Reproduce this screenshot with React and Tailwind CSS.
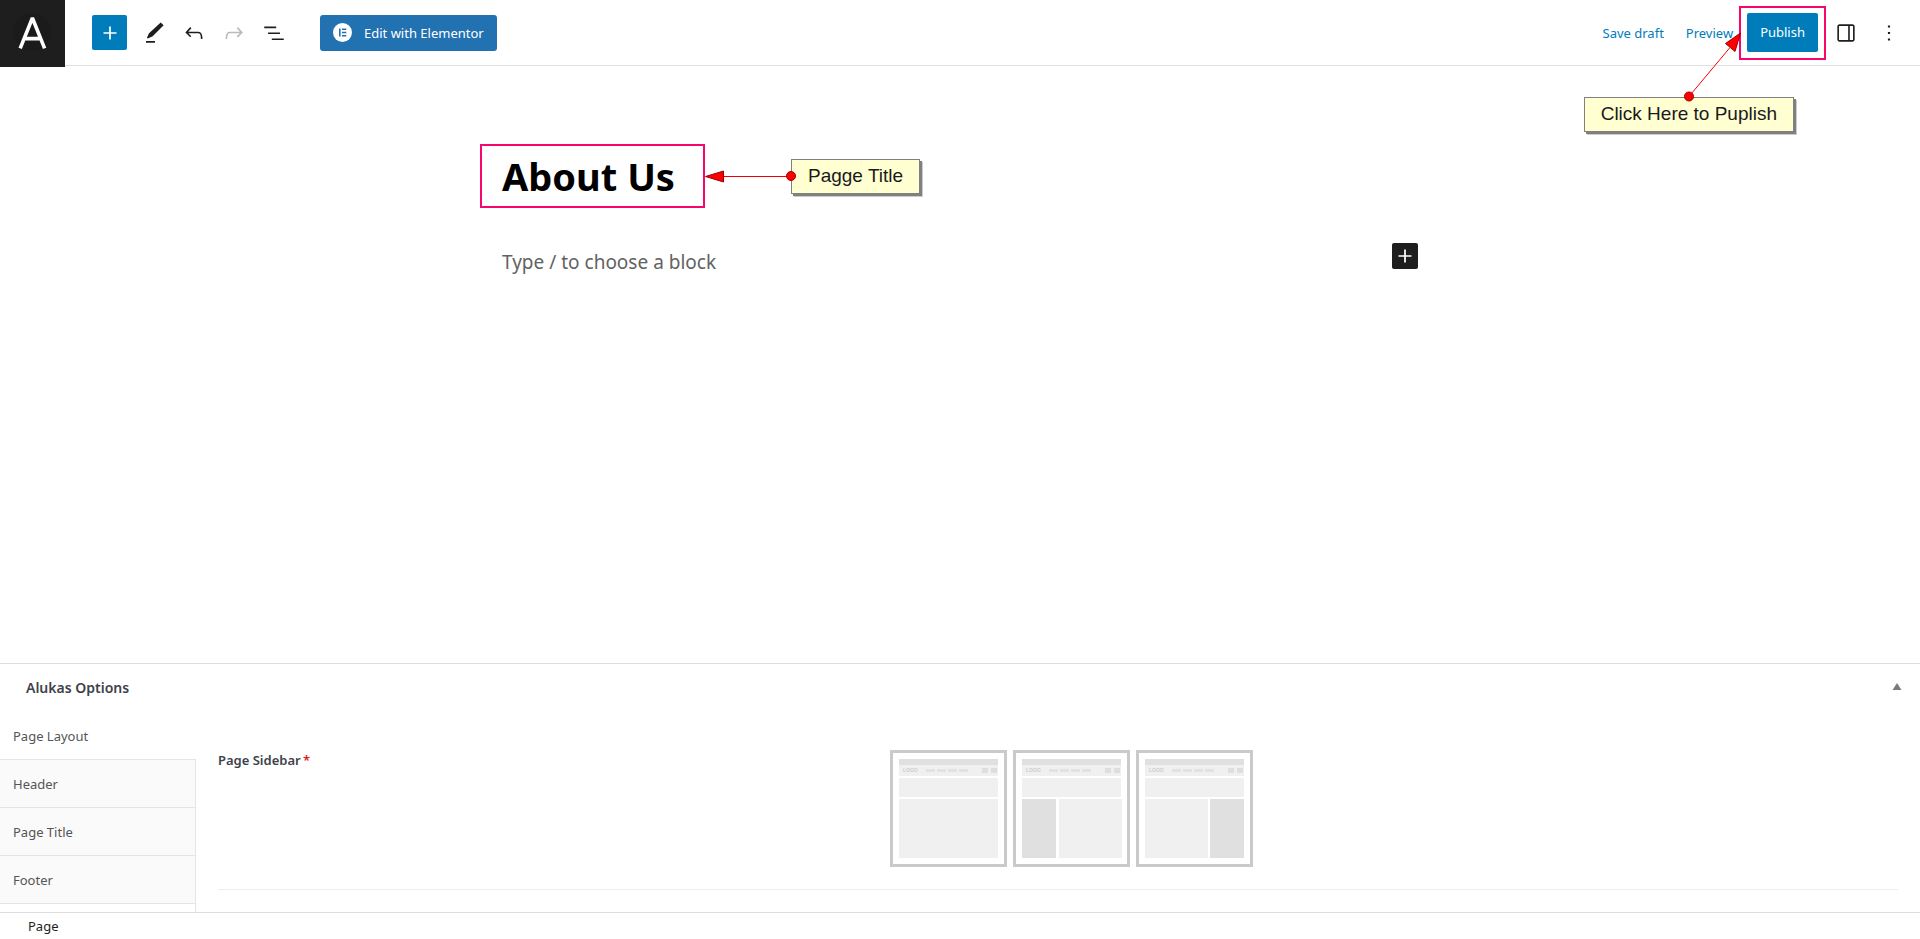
import React from 'react';

const paths = {
  plus: 'M18 11.2h-5.2V6h-1.6v5.2H6v1.6h5.2V18h1.6v-5.2H18z',
  edit: 'M18.2 2.2 20.9 4.9 10.8 15.1 6.2 17 5.5 16.3 7.4 12.2zM4.6 19.4h8.3v1.5H4.6z',
  undo: 'M18.3 11.7c-.6-.6-1.4-.9-2.3-.9H6.7l2.9-3.3-1.1-1-4.5 5L8.5 16l1-1-2.7-2.7H16c.5 0 .9.2 1.3.5 1 1 1 3.4 1 4.5v.3h1.5v-.2c0-1.5 0-4.3-1.5-5.7z',
  redo: 'M15.6 6.5l-1.1 1 2.9 3.3H8c-.9 0-1.7.3-2.3.9-1.4 1.5-1.4 4.2-1.4 5.6v.2h1.5v-.3c0-1.1 0-3.5 1-4.5.3-.3.7-.5 1.3-.5h9.2L14.5 15l1.1 1.1 4.6-4.6-4.6-5z',
  list: 'M3 6h11v1.5H3V6Zm3.5 5.5h11V13h-11v-1.5ZM21 17H10v1.5h11V17Z',
  drawer:
    'M18 4H6c-1.1 0-2 .9-2 2v12c0 1.1.9 2 2 2h12c1.1 0 2-.9 2-2V6c0-1.1-.9-2-2-2zm-4 14.5H6c-.3 0-.5-.2-.5-.5V6c0-.3.2-.5.5-.5h8v13zm4.5-.5c0 .3-.2.5-.5.5h-2.5v-13H18c.3 0 .5.2.5.5v12z',
  more: 'M13 19h-2v-2h2v2zm0-6h-2v-2h2v2zm0-6h-2V5h2v2z',
};

function Icon({ name }) {
  return (
    <svg viewBox="0 0 24 24" className="size-[26px] shrink-0 fill-current" aria-hidden="true">
      <path d={paths[name]} />
    </svg>
  );
}

function ToolButton({ name, label, disabled }) {
  return (
    <button
      type="button"
      aria-label={label}
      disabled={disabled}
      className="flex h-9 w-[26px] items-center justify-center text-[#1e1e1e] disabled:text-[#bbbbbb]"
    >
      <Icon name={name} />
    </button>
  );
}

function Callout({ children }) {
  return (
    <div className="flex h-[35px] items-center border border-[#808080] bg-[#ffffd2] px-4 font-['Liberation_Sans',Arial,sans-serif] text-[19px] leading-6 whitespace-nowrap text-[#1a1a1a] shadow-[2px_2px_0_#808080,3px_3px_0_#cccccc]">
      {children}
    </div>
  );
}

function Header() {
  return (
    <header className="flex h-[66px] items-center border-b border-[#e0e0e0]">
      <a href="#pages" aria-label="View pages" className="h-[67px] w-[65px] shrink-0 self-start bg-[#1e1e1e]">
        <svg viewBox="0 0 65 67" className="h-full w-full" aria-hidden="true">
          <circle cx="32.5" cy="32" r="19" fill="#1b1b1b" />
          <path
            d="M20.2 48.3 32.4 18 44.6 48.3M25.5 38.6h13.8"
            fill="none"
            stroke="#fff"
            strokeWidth="3.6"
            strokeLinejoin="miter"
            strokeMiterlimit="1.5"
          />
        </svg>
      </a>
      <div className="ml-[27px] flex items-center gap-[14px]">
        <button
          type="button"
          aria-label="Toggle block inserter"
          className="flex size-[35px] items-center justify-center rounded-xs bg-[#007cba] text-white"
        >
          <Icon name="plus" />
        </button>
        <ToolButton name="edit" label="Tools" />
        <ToolButton name="undo" label="Undo" />
        <ToolButton name="redo" label="Redo" disabled />
        <ToolButton name="list" label="Document overview" />
      </div>
      <button
        type="button"
        className="ml-[33px] flex h-9 items-center gap-3 rounded-[3px] bg-[#2271b1] px-[13px] text-[13px] leading-5 whitespace-nowrap text-white"
      >
        <svg viewBox="0 0 19 19" className="size-[19px] shrink-0" aria-hidden="true">
          <circle cx="9.5" cy="9.5" r="9.5" fill="#fff" />
          <path d="M6 5.5h1.6v8H6zM9 5.5h4.3v1.6H9zM9 8.7h4.3v1.6H9zM9 11.9h4.3v1.6H9z" fill="#2271b1" />
        </svg>
        Edit with Elementor
      </button>
      <div className="ml-auto flex items-center pr-[18px] text-[13px] leading-5 whitespace-nowrap">
        <button type="button" className="text-[#007cba]">
          Save draft
        </button>
        <button type="button" className="ml-[22px] text-[#007cba]">
          Preview
        </button>
        <div className="relative ml-[6px] border-2 border-[#f9066c] px-[6px] pt-[5px] pb-[6px]">
          <button type="button" className="flex h-[39px] items-center rounded-xs bg-[#007cba] px-[13px] text-white">
            Publish
          </button>
          <div className="absolute top-[89px] right-[30px]">
            <Callout>Click Here to Puplish</Callout>
          </div>
          <svg
            viewBox="0 0 62 74"
            className="absolute top-[22px] -left-[58px] h-[74px] w-[62px]"
            aria-hidden="true"
          >
            <path d="M6 66.5 47 17.5" stroke="#f00" strokeWidth="1" />
            <path d="M57.5 3 42.5 13.5 52 21.5z" fill="#f00" stroke="#900" strokeWidth="1" />
            <circle cx="6" cy="66.5" r="4.5" fill="#f00" stroke="#900" strokeWidth="1" />
          </svg>
        </div>
        <div className="ml-[7px] flex gap-[17px]">
          <ToolButton name="drawer" label="Settings" />
          <ToolButton name="more" label="Options" />
        </div>
      </div>
    </header>
  );
}

function Editor() {
  return (
    <main className="flex-1 pt-[78px] pb-10">
      <div className="mx-auto w-full max-w-[916px]">
        <div className="-ml-[22px] flex items-center">
          <h1 className="flex h-16 w-[225px] items-center border-2 border-[#f9066c] pl-5 text-[38px] leading-[60px] font-bold whitespace-nowrap text-black">
            About Us
          </h1>
          <svg viewBox="0 0 86 16" className="h-4 w-[86px] shrink-0" aria-hidden="true">
            <path d="M18 8.5h68" stroke="#e00" strokeWidth="1" />
            <path d="M.5 8.5 18.5 3v11z" fill="#f00" stroke="#900" strokeWidth="1" />
          </svg>
          <div className="relative">
            <Callout>Pagge Title</Callout>
            <svg viewBox="0 0 10 10" className="absolute top-3 -left-[5px] size-[10px]" aria-hidden="true">
              <circle cx="5" cy="5" r="4.5" fill="#f00" stroke="#900" strokeWidth="1" />
            </svg>
          </div>
        </div>
        <div className="mt-[35px] flex items-start justify-between">
          <input
            type="text"
            aria-label="Add default block"
            placeholder="Type / to choose a block"
            className="h-[38px] min-w-0 flex-1 bg-transparent text-[19px] outline-none placeholder:text-[#626262]"
          />
          <button
            type="button"
            aria-label="Add block"
            className="flex size-[26px] items-center justify-center rounded-xs bg-[#1e1e1e] text-white"
          >
            <Icon name="plus" />
          </button>
        </div>
      </div>
    </main>
  );
}

function LayoutPreview({ sidebar }) {
  return (
    <svg viewBox="0 0 111 111" className="size-[111px]" aria-hidden="true">
      <path d="M6 6h99v17H6zM6 25h99v19H6z" fill="#f0f0f0" />
      <path d="M6 6h99v6H6z" fill="#e0e0e0" />
      <text x="10" y="19" fontSize="5" fontWeight="bold" fill="#cccccc" fontFamily="Liberation Sans, sans-serif">
        LOGO
      </text>
      <path d="M33 16h9v3h-9zM44 16h9v3h-9zM55 16h9v3h-9zM66 16h9v3h-9z" fill="#e2e2e2" />
      <path d="M89 15h6v5h-6zM98 15h6v5h-6z" fill="#dedede" />
      {sidebar === 'none' && <path d="M6 46h99v59H6z" fill="#f0f0f0" />}
      {sidebar === 'left' && (
        <>
          <path d="M6 46h34v59H6z" fill="#e0e0e0" />
          <path d="M43 46h63v59H43z" fill="#f0f0f0" />
        </>
      )}
      {sidebar === 'right' && (
        <>
          <path d="M6 46h63v59H6z" fill="#f0f0f0" />
          <path d="M71 46h34v59H71z" fill="#e0e0e0" />
        </>
      )}
    </svg>
  );
}

const layouts = [
  { id: 'none', label: 'No sidebar' },
  { id: 'left', label: 'Left sidebar' },
  { id: 'right', label: 'Right sidebar' },
];

function Options() {
  return (
    <section className="border-t border-[#dddddd]">
      <div className="flex h-12 items-center justify-between pr-[18px] pl-[26px]">
        <h2 className="text-sm leading-6 font-semibold text-[#3c434a]">Alukas Options</h2>
        <button type="button" aria-label="Toggle panel" className="flex h-6 items-center">
          <svg viewBox="0 0 10 7" className="mb-1 h-[7px] w-[10px]" aria-hidden="true">
            <path d="M5 0 9.5 7h-9z" fill="#787c82" />
          </svg>
        </button>
      </div>
      <div className="flex">
        <nav className="flex w-[196px] shrink-0 flex-col text-[13px] leading-5 text-[#555555]">
          <a href="#layout" className="flex h-[47px] items-center pl-[13px]">
            Page Layout
          </a>
          {['Header', 'Page Title', 'Footer'].map((tab) => (
            <a
              key={tab}
              href="#tab"
              className="flex h-12 items-center border-t border-r border-[#e5e5e5] bg-[#fafafa] pl-[13px]"
            >
              {tab}
            </a>
          ))}
          <div className="h-[9px] border-t border-r border-[#e5e5e5]" />
        </nav>
        <div className="flex-1 px-[22px]">
          <fieldset
            aria-labelledby="page-sidebar"
            className="flex border-b border-[#eeeeee] pt-[38px] pb-[22px]"
          >
            <div id="page-sidebar" className="w-2/5 text-[13px] leading-5 font-semibold text-[#3c434a]">
              Page Sidebar <span className="-ml-px text-[#e02020]">*</span>
            </div>
            <div className="flex gap-[6px]">
              {layouts.map(({ id, label }) => (
                <label key={id} className="border-3 border-[#cacaca]">
                  <input type="radio" name="sidebar" value={id} aria-label={label} className="sr-only" />
                  <LayoutPreview sidebar={id} />
                </label>
              ))}
            </div>
          </fieldset>
        </div>
      </div>
    </section>
  );
}

export default function App() {
  return (
    <div className="flex min-h-screen flex-col overflow-x-hidden bg-white font-['Noto_Sans','Open_Sans',sans-serif] text-[#1e1e1e]">
      <Header />
      <Editor />
      <Options />
      <footer className="flex h-[27px] items-center border-t border-[#dddddd] pl-7 text-[13px] leading-5">
        Page
      </footer>
    </div>
  );
}
